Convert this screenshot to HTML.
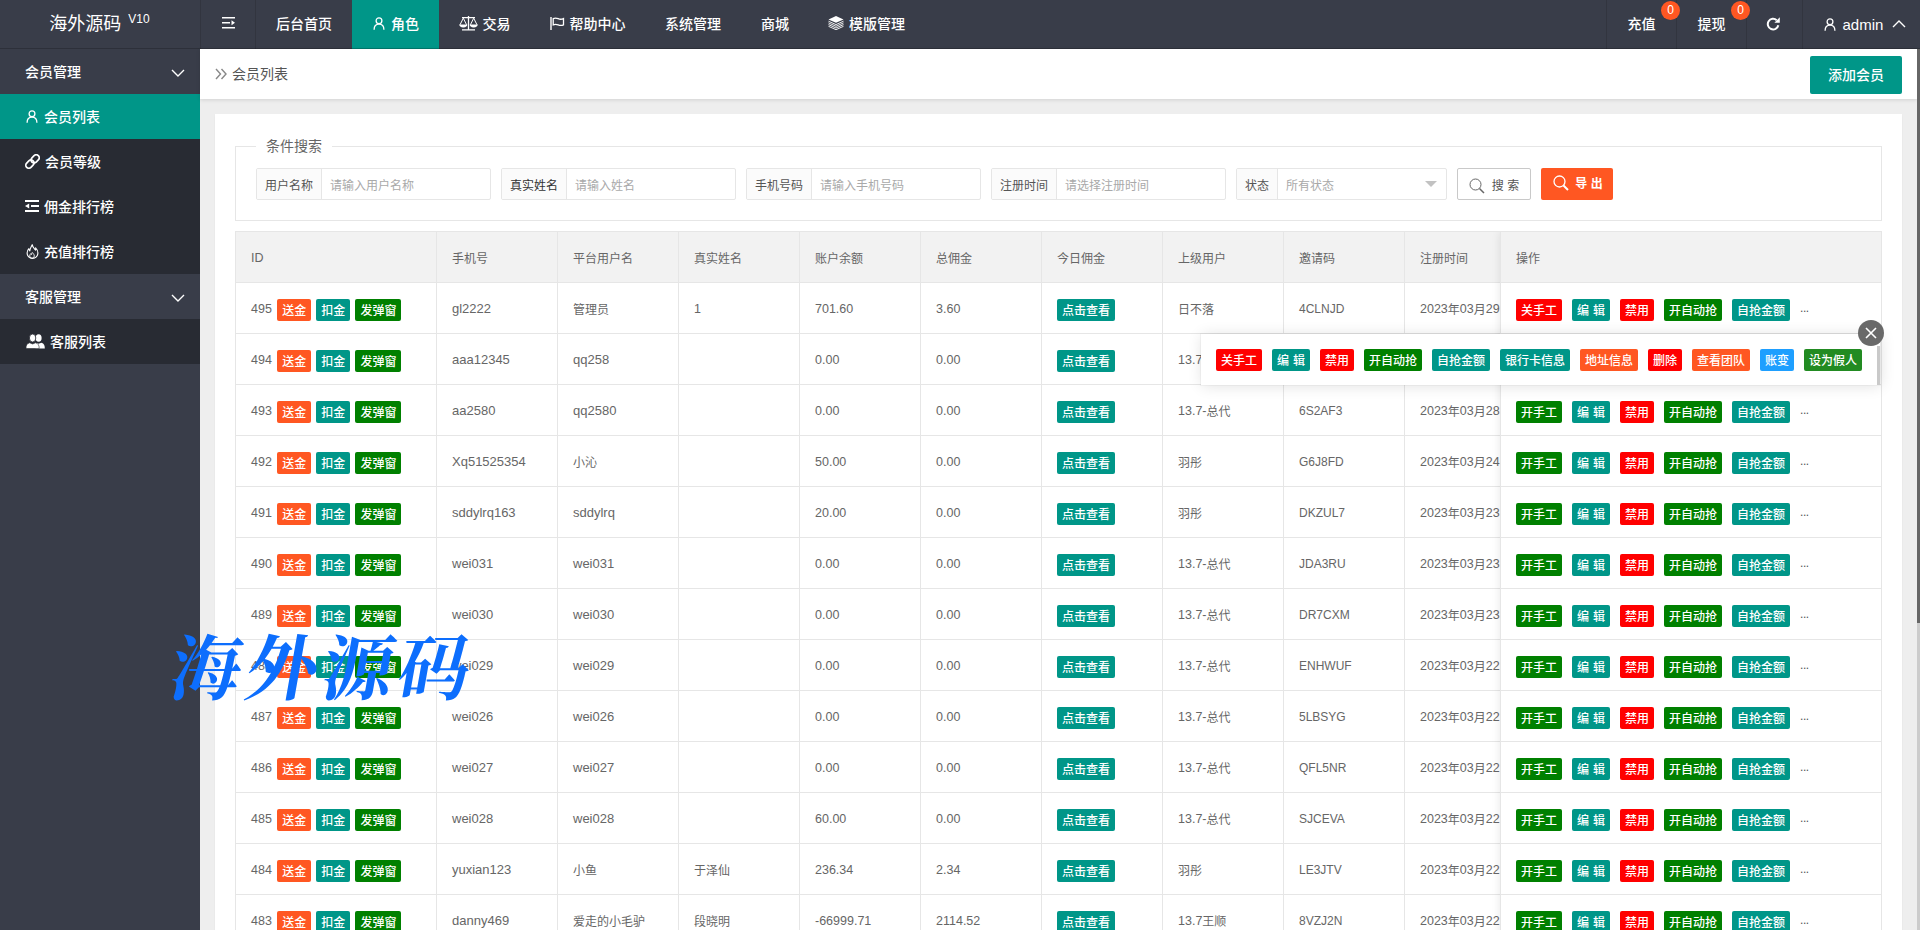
<!DOCTYPE html>
<html lang="zh-CN">
<head>
<meta charset="utf-8">
<title>会员列表</title>
<style>
*{box-sizing:border-box;margin:0;padding:0}
html,body{width:1920px;height:930px;overflow:hidden}
body{font-family:"Liberation Sans","Noto Sans CJK SC",sans-serif;font-size:14px;color:#666;background:#eee;position:relative}
a{text-decoration:none;color:inherit}
ul{list-style:none}
/* header */
#hd{position:absolute;left:0;top:0;width:1920px;height:49px;background:#393D49;color:#fff}
#hd:after{content:"";position:absolute;left:0;top:48px;width:1920px;height:1px;background:rgba(0,0,0,.2);z-index:2}
#logo{position:absolute;left:0;top:0;width:200px;height:49px;line-height:49px;font-weight:400;text-align:center;font-size:18px;color:#fff;padding-right:1px}
#logo sup{font-size:12px;position:relative;top:-7px;vertical-align:baseline;margin-left:2px}
.nav{position:absolute;top:0;height:49px;line-height:49px;font-size:14px;font-weight:500;color:#fff;text-align:center;white-space:nowrap}
.nav svg{vertical-align:middle;margin-right:5px;position:relative;top:-2px}
.vline{position:absolute;top:0;width:1px;height:49px;background:#32353f}
.badge{z-index:3;position:absolute;width:19px;height:19px;border-radius:10px;background:#FF5722;color:#fff;font-size:12px;line-height:19px;text-align:center}
/* side */
#side{position:absolute;left:0;top:49px;width:200px;height:881px;background:#393D49;color:#fff}
#side .grp{height:45px;line-height:46px;padding-left:25px;font-size:14px;font-weight:500;position:relative}
#side .grp svg{position:absolute;right:15px;top:19.500px}
#side .it{height:45px;line-height:46px;padding-left:25px;font-size:14px;font-weight:500;background:#282B33;position:relative;white-space:nowrap}
#side .it.on{background:#009688}
#side .it svg{vertical-align:middle;margin-right:5px;position:relative;top:-2px}
/* crumb */
#crumb{position:absolute;left:200px;top:49px;width:1717px;height:50px;background:#fff;box-shadow:0 1px 4px rgba(0,0,0,.12)}
#crumb .t{position:absolute;left:32px;top:0;line-height:51px;font-size:14px;color:#555}
#crumb svg{position:absolute;left:15px;top:19px}
#addbtn{position:absolute;left:1610px;top:7px;width:92px;height:38px;line-height:38px;background:#009688;color:#fff;border-radius:2px;text-align:center;font-size:14px;font-weight:500}
/* card */
#card{position:absolute;left:215px;top:114px;width:1687px;height:830px;background:#fff;box-shadow:0 1px 2px rgba(0,0,0,.05)}
#fs{position:absolute;left:20px;top:32px;width:1647px;height:75px;border:1px solid #e6e6e6}
#lg{position:absolute;left:20px;top:-11px;padding:0 10px;font-size:14px;color:#666;line-height:20px;background:#fff}
.fi{position:absolute;top:21px;height:32px;border:1px solid #e6e6e6;border-radius:2px;background:#fff;font-size:12px;line-height:34px;white-space:nowrap;overflow:hidden}
.fi .lb{position:absolute;left:0;top:0;height:30px;overflow:hidden;padding:0 8px;background:#FBFBFB;border-right:1px solid #e6e6e6;color:#555}
.fi .ph{position:absolute;top:0;color:#a9a9a9}
.btn-s{position:absolute;top:21px;height:32px;overflow:hidden;line-height:34px;font-size:12px;border-radius:2px;text-align:center;white-space:nowrap}
/* table */
#tb{position:absolute;left:20px;top:117px;width:1647px;height:720px;border:1px solid #e6e6e6;border-bottom:0;overflow:hidden}
table{border-collapse:separate;border-spacing:0;table-layout:fixed}
th,td{height:51px;border-right:1px solid #e6e6e6;border-bottom:1px solid #e6e6e6;padding:0;text-align:left;font-weight:400;font-size:14px;color:#666}
th{background:#f2f2f2}
.cell{padding:0 15px;height:28px;line-height:28px;white-space:nowrap;overflow:hidden;font-size:12.5px}
.cell .z{font-size:12px;position:relative;top:1px}
.cell.z{font-size:12px;line-height:32px}
.cell{line-height:30px}
.cell.f13{font-size:13px}.cell.f12{font-size:12px}
td.c-id .cell{word-spacing:0}
.b{display:inline-block;height:22px;line-height:25px;overflow:hidden;font-weight:500;padding:0 5px;font-size:12px;color:#fff;border-radius:2px;vertical-align:middle;position:relative;top:.3px;word-spacing:.6px}
.b-or{background:#FF5722}.b-tl{background:#009688}.b-gr{background:#008000}.b-rd{background:#FF0000}.b-bl{background:#1E9FFF}.b-g2{background:#228B22}
td.c-id .b{margin-left:5px}
td.c-id .b:first-child{margin-left:2px}
#fix{position:absolute;left:1264px;top:0;width:382px;background:#fff;box-shadow:-1px 0 8px rgba(0,0,0,.08);border-left:1px solid #e6e6e6}
#fix table{width:381px}
#fix .b+.b{margin-left:10px}
#fix .more{margin-left:10px;font-size:12px;letter-spacing:-.4px;color:#555;position:relative;top:-1px}
#fix th,#fix td{border-right:0}
/* tip */
#tip{position:absolute;left:1201px;top:334px;width:679px;height:51px;background:#fff;box-shadow:0 0 0 1px rgba(0,0,0,.03),1px 1px 14px rgba(0,0,0,.12);padding:0 15px;line-height:51px;white-space:nowrap}
#tip .b{top:0;vertical-align:middle;margin-top:-1px}
#tip .b+.b{margin-left:10px}
#tipx{position:absolute;left:1858px;top:320px;width:26px;height:26px;border-radius:13px;background:#696969;}
#wm{position:absolute;left:171px;top:624px;font-family:"Liberation Serif","Noto Serif CJK SC",serif;font-weight:700;font-size:71px;line-height:92px;color:#0d6efd;letter-spacing:5px;transform:skewX(-10deg);transform-origin:0 50%;white-space:nowrap}
#tipsb{position:absolute;left:1877px;top:346px;width:3px;height:39px;background:#c9c9c9}
#sb1{position:absolute;left:1917px;top:49px;width:3px;height:574px;background:#666}
#sb2{position:absolute;left:1917px;top:623px;width:3px;height:307px;background:#ccc}
</style>
</head>
<body>
<div id="hd">
  <div id="logo">海外源码 <sup>V10</sup></div>
  <div class="vline" style="left:200px"></div>
  <div class="nav" style="left:201px;width:54px"><svg width="13" height="12" viewBox="0 0 13 12" style="margin:0"><path d="M0 .75h13M0 5.750h8M0 10.750h13" stroke="#fff" stroke-width="1.500" fill="none"/><path d="M9.500 3.200l3.500 2.550-3.500 2.550z" fill="#fff"/></svg></div>
  <div class="vline" style="left:255px"></div>
  <div class="nav" style="left:256px;width:96px">后台首页</div>
  <div class="nav" style="left:352px;width:87px;background:#009688"><svg width="14" height="14" viewBox="0 0 14 14"><circle cx="7" cy="4.800" r="2.900" stroke="#fff" stroke-width="1.300" fill="none"/><path d="M2.100 13.700c0-3.600 2.200-5.600 4.900-5.600s4.900 2 4.900 5.600" stroke="#fff" stroke-width="1.300" fill="none"/></svg>角色</div>
  <div class="nav" style="left:439px;width:91px"><svg width="19" height="15" viewBox="0 0 19 15"><path d="M3 1.700h13M9.500 0v14M3 13.800h13" stroke="#fff" stroke-width="1.300" fill="none"/><path d="M4.300 2.200L1 8.800M4.300 2.200L7.600 8.800M14.700 2.200L11.400 8.800M14.700 2.200L18 8.800" stroke="#fff" stroke-width="1" fill="none"/><path d="M.3 8.600h8a4 2.800 0 0 1-8 0zM10.700 8.600h8a4 2.800 0 0 1-8 0z" fill="#fff"/></svg>交易</div>
  <div class="nav" style="left:530px;width:115px"><svg width="15" height="13" viewBox="0 0 15 13"><path d="M1 0v13" stroke="#fff" stroke-width="1.400" fill="none"/><path d="M3.200 1.600c2-1 3.500-.6 5 .1s3.200.9 5.300-.1v6.200c-2 1-3.700.8-5.300.1s-3-1-5-.1z" stroke="#fff" stroke-width="1.300" fill="none"/></svg>帮助中心</div>
  <div class="nav" style="left:645px;width:96px">系统管理</div>
  <div class="nav" style="left:741px;width:68px">商城</div>
  <div class="nav" style="left:809px;width:115px"><svg width="16" height="14" viewBox="0 0 16 14"><path d="M8 0l7.500 3.400-7.500 3.400-7.500-3.400z" fill="#fff"/><path d="M.5 5.200l7.500 3.400 7.500-3.400M.5 6.900l7.500 3.400 7.500-3.400M.5 8.600l7.500 3.400 7.500-3.400M.5 10.300l7.500 3.400 7.500-3.400" stroke="#fff" stroke-width=".900" fill="none"/></svg>模版管理</div>
  <div class="vline" style="left:1606px"></div>
  <div class="nav" style="left:1607px;width:69px">充值</div>
  <div class="badge" style="left:1661px;top:1px">0</div>
  <div class="vline" style="left:1676px"></div>
  <div class="nav" style="left:1677px;width:69px">提现</div>
  <div class="badge" style="left:1731px;top:1px">0</div>
  <div class="vline" style="left:1746px"></div>
  <div class="nav" style="left:1747px;width:55px"><svg width="15" height="14" viewBox="0 0 15 14" style="margin:0;left:-1px;top:-1px"><path d="M12.300 8.200a5.300 5.300 0 1 1-1.600-5" stroke="#fff" stroke-width="2" fill="none"/><path d="M13.800 .3v5.400h-5.400z" fill="#fff"/></svg></div>
  <div class="vline" style="left:1802px"></div>
  <div class="nav" style="left:1806px;width:117px;font-size:15px"><svg width="14" height="14" viewBox="0 0 14 14"><circle cx="7" cy="4.800" r="2.900" stroke="#fff" stroke-width="1.300" fill="none"/><path d="M2.100 13.700c0-3.600 2.200-5.600 4.900-5.600s4.900 2 4.900 5.600" stroke="#fff" stroke-width="1.300" fill="none"/></svg>admin <svg width="14" height="8" viewBox="0 0 14 8" style="margin:0 0 0 4px"><path d="M1 7l6-6 6 6" stroke="#fff" stroke-width="1.400" fill="none"/></svg></div>
</div>
<div id="side">
  <div class="grp">会员管理<svg width="14" height="8" viewBox="0 0 14 8"><path d="M1 1l6 6 6-6" stroke="#fff" stroke-width="1.400" fill="none"/></svg></div>
  <div class="it on"><svg width="14" height="14" viewBox="0 0 14 14"><circle cx="7" cy="4.800" r="2.900" stroke="#fff" stroke-width="1.300" fill="none"/><path d="M2.100 13.700c0-3.600 2.200-5.600 4.900-5.600s4.900 2 4.900 5.600" stroke="#fff" stroke-width="1.300" fill="none"/></svg>会员列表</div>
  <div class="it"><svg width="15" height="15" viewBox="0 0 15 15"><g transform="rotate(-45 7.500 7.500)" stroke="#fff" stroke-width="1.700" fill="none"><rect x="-.7" y="4.500" width="9" height="6" rx="3"/><rect x="6.700" y="4.500" width="9" height="6" rx="3"/></g></svg>会员等级</div>
  <div class="it"><svg width="14" height="12" viewBox="0 0 14 12"><path d="M0 1h14M6 6h8M0 11h14" stroke="#fff" stroke-width="1.800" fill="none"/><path d="M4.200 3.400L0 6l4.200 2.600z" fill="#fff"/></svg>佣金排行榜</div>
  <div class="it"><svg width="14" height="15" viewBox="0 0 14 15"><path d="M7.200 .7c.4 2.600 2 3.800 3.300 5.400.3-.8.300-1.500.1-2.300 1.500 1.500 2.300 3.300 2.300 5.200a5.400 5.400 0 0 1-10.800 0c0-1.800.8-3.300 1.800-4.300.1.900.4 1.600.9 2.200.3-2.500 1.500-4.500 2.400-6.200z" stroke="#fff" stroke-width="1.100" fill="none" stroke-linejoin="round"/><path d="M7.300 8.500c1.200 1.200 2 2.300 2 3.500a2.300 2.300 0 0 1-4.600 0c0-1 .5-1.800 1.100-2.400.2.500.4.800.7 1 .1-.8.400-1.500.8-2.100z" stroke="#fff" stroke-width=".900" fill="none"/></svg>充值排行榜</div>
  <div class="grp">客服管理<svg width="14" height="8" viewBox="0 0 14 8"><path d="M1 1l6 6 6-6" stroke="#fff" stroke-width="1.400" fill="none"/></svg></div>
  <div class="it"><svg width="19" height="15" viewBox="0 0 19 15" style="margin-right:6px;left:1px"><ellipse cx="12.600" cy="4" rx="3" ry="3.800" fill="#fff"/><path d="M9.500 8.800l3 1 3-1c2.500.9 3.300 2.300 3.300 5.700h-9.300z" fill="#fff"/><ellipse cx="6.600" cy="4" rx="3.200" ry="4" fill="#fff" stroke="#282B33" stroke-width=".800"/><path d="M0 14.500c0-3.400 1-4.800 3.600-5.700l3 1.200 3-1.200c2.600.9 3.600 2.300 3.600 5.700z" fill="#fff" stroke="#282B33" stroke-width=".600"/></svg>客服列表</div>
</div>
<div id="crumb">
  <svg width="12" height="12" viewBox="0 0 12 12"><path d="M1 1l4.500 5-4.500 5M6.500 1l4.500 5-4.500 5" stroke="#888" stroke-width="1.400" fill="none"/></svg>
  <div class="t">会员列表</div>
  <div id="addbtn">添加会员</div>
</div>
<div id="card">
  <div id="fs"><div id="lg">条件搜索</div>
    <div class="fi" style="left:20px;width:235px"><span class="lb">用户名称</span><span class="ph" style="left:73px">请输入用户名称</span></div>
    <div class="fi" style="left:265px;width:235px"><span class="lb" style="color:#333">真实姓名</span><span class="ph" style="left:73px">请输入姓名</span></div>
    <div class="fi" style="left:510px;width:235px"><span class="lb">手机号码</span><span class="ph" style="left:73px">请输入手机号码</span></div>
    <div class="fi" style="left:755px;width:235px"><span class="lb">注册时间</span><span class="ph" style="left:73px">请选择注册时间</span></div>
    <div class="fi" style="left:1000px;width:211px"><span class="lb">状态</span><span class="ph" style="left:49px">所有状态</span><svg width="12" height="6" viewBox="0 0 12 6" style="position:absolute;right:9px;top:12px"><path d="M0 0h12L6 6z" fill="#c2c2c2"/></svg></div>
    <div class="btn-s" style="left:1221px;width:74px;border:1px solid #c9c9c9;color:#555;background:#fff"><svg width="16" height="16" viewBox="0 0 16 16" style="vertical-align:middle;margin-right:7px;position:relative;top:-1px"><circle cx="6.500" cy="6.500" r="5.500" stroke="#666" stroke-width="1" fill="none"/><path d="M10.500 10.500l4.500 4.500" stroke="#666" stroke-width="1.500"/></svg>搜 索</div>
    <div class="btn-s" style="left:1305px;width:72px;background:#FF5722;color:#fff;line-height:32px;font-size:12px;font-weight:700;padding-left:2px"><svg width="16" height="16" viewBox="0 0 16 16" style="vertical-align:middle;margin-right:6px;position:relative;top:-2px"><circle cx="6.500" cy="6.500" r="5.500" stroke="#fff" stroke-width="1.300" fill="none"/><path d="M10.500 10.500l4.500 4.500" stroke="#fff" stroke-width="2"/></svg>导 出</div>
  </div>
  <div id="tb">
    <table style="width:1360px">
      <colgroup><col style="width:201px"><col style="width:121px"><col style="width:121px"><col style="width:121px"><col style="width:121px"><col style="width:121px"><col style="width:121px"><col style="width:121px"><col style="width:121px"><col style="width:191px"></colgroup>
      <thead><tr><th><div class="cell">ID</div></th><th><div class="cell z">手机号</div></th><th><div class="cell z">平台用户名</div></th><th><div class="cell z">真实姓名</div></th><th><div class="cell z">账户余额</div></th><th><div class="cell z">总佣金</div></th><th><div class="cell z">今日佣金</div></th><th><div class="cell z">上级用户</div></th><th><div class="cell z">邀请码</div></th><th><div class="cell z">注册时间</div></th></tr></thead>
      <tbody>
<tr><td class="c-id"><div class="cell">495 <a class="b b-or">送金</a><a class="b b-tl">扣金</a><a class="b b-gr">发弹窗</a></div></td><td><div class="cell f13">gl2222</div></td><td><div class="cell f13"><span class="z">管理员</span></div></td><td><div class="cell">1</div></td><td><div class="cell">701.60</div></td><td><div class="cell">3.60</div></td><td><div class="cell"><a class="b b-tl">点击查看</a></div></td><td><div class="cell"><span class="z">日不落</span></div></td><td><div class="cell f12">4CLNJD</div></td><td><div class="cell">2023<span class="z">年</span>03<span class="z">月</span>29<span class="z">日</span></div></td></tr>
<tr><td class="c-id"><div class="cell">494 <a class="b b-or">送金</a><a class="b b-tl">扣金</a><a class="b b-gr">发弹窗</a></div></td><td><div class="cell f13">aaa12345</div></td><td><div class="cell f13">qq258</div></td><td><div class="cell"></div></td><td><div class="cell">0.00</div></td><td><div class="cell">0.00</div></td><td><div class="cell"><a class="b b-tl">点击查看</a></div></td><td><div class="cell">13.7-<span class="z">总代</span></div></td><td><div class="cell f12"></div></td><td><div class="cell">2023<span class="z">年</span>03<span class="z">月</span>29<span class="z">日</span></div></td></tr>
<tr><td class="c-id"><div class="cell">493 <a class="b b-or">送金</a><a class="b b-tl">扣金</a><a class="b b-gr">发弹窗</a></div></td><td><div class="cell f13">aa2580</div></td><td><div class="cell f13">qq2580</div></td><td><div class="cell"></div></td><td><div class="cell">0.00</div></td><td><div class="cell">0.00</div></td><td><div class="cell"><a class="b b-tl">点击查看</a></div></td><td><div class="cell">13.7-<span class="z">总代</span></div></td><td><div class="cell f12">6S2AF3</div></td><td><div class="cell">2023<span class="z">年</span>03<span class="z">月</span>28<span class="z">日</span></div></td></tr>
<tr><td class="c-id"><div class="cell">492 <a class="b b-or">送金</a><a class="b b-tl">扣金</a><a class="b b-gr">发弹窗</a></div></td><td><div class="cell f13">Xq51525354</div></td><td><div class="cell f13"><span class="z">小沁</span></div></td><td><div class="cell"></div></td><td><div class="cell">50.00</div></td><td><div class="cell">0.00</div></td><td><div class="cell"><a class="b b-tl">点击查看</a></div></td><td><div class="cell"><span class="z">羽彤</span></div></td><td><div class="cell f12">G6J8FD</div></td><td><div class="cell">2023<span class="z">年</span>03<span class="z">月</span>24<span class="z">日</span></div></td></tr>
<tr><td class="c-id"><div class="cell">491 <a class="b b-or">送金</a><a class="b b-tl">扣金</a><a class="b b-gr">发弹窗</a></div></td><td><div class="cell f13">sddylrq163</div></td><td><div class="cell f13">sddylrq</div></td><td><div class="cell"></div></td><td><div class="cell">20.00</div></td><td><div class="cell">0.00</div></td><td><div class="cell"><a class="b b-tl">点击查看</a></div></td><td><div class="cell"><span class="z">羽彤</span></div></td><td><div class="cell f12">DKZUL7</div></td><td><div class="cell">2023<span class="z">年</span>03<span class="z">月</span>23<span class="z">日</span></div></td></tr>
<tr><td class="c-id"><div class="cell">490 <a class="b b-or">送金</a><a class="b b-tl">扣金</a><a class="b b-gr">发弹窗</a></div></td><td><div class="cell f13">wei031</div></td><td><div class="cell f13">wei031</div></td><td><div class="cell"></div></td><td><div class="cell">0.00</div></td><td><div class="cell">0.00</div></td><td><div class="cell"><a class="b b-tl">点击查看</a></div></td><td><div class="cell">13.7-<span class="z">总代</span></div></td><td><div class="cell f12">JDA3RU</div></td><td><div class="cell">2023<span class="z">年</span>03<span class="z">月</span>23<span class="z">日</span></div></td></tr>
<tr><td class="c-id"><div class="cell">489 <a class="b b-or">送金</a><a class="b b-tl">扣金</a><a class="b b-gr">发弹窗</a></div></td><td><div class="cell f13">wei030</div></td><td><div class="cell f13">wei030</div></td><td><div class="cell"></div></td><td><div class="cell">0.00</div></td><td><div class="cell">0.00</div></td><td><div class="cell"><a class="b b-tl">点击查看</a></div></td><td><div class="cell">13.7-<span class="z">总代</span></div></td><td><div class="cell f12">DR7CXM</div></td><td><div class="cell">2023<span class="z">年</span>03<span class="z">月</span>23<span class="z">日</span></div></td></tr>
<tr><td class="c-id"><div class="cell">488 <a class="b b-or">送金</a><a class="b b-tl">扣金</a><a class="b b-gr">发弹窗</a></div></td><td><div class="cell f13">wei029</div></td><td><div class="cell f13">wei029</div></td><td><div class="cell"></div></td><td><div class="cell">0.00</div></td><td><div class="cell">0.00</div></td><td><div class="cell"><a class="b b-tl">点击查看</a></div></td><td><div class="cell">13.7-<span class="z">总代</span></div></td><td><div class="cell f12">ENHWUF</div></td><td><div class="cell">2023<span class="z">年</span>03<span class="z">月</span>22<span class="z">日</span></div></td></tr>
<tr><td class="c-id"><div class="cell">487 <a class="b b-or">送金</a><a class="b b-tl">扣金</a><a class="b b-gr">发弹窗</a></div></td><td><div class="cell f13">wei026</div></td><td><div class="cell f13">wei026</div></td><td><div class="cell"></div></td><td><div class="cell">0.00</div></td><td><div class="cell">0.00</div></td><td><div class="cell"><a class="b b-tl">点击查看</a></div></td><td><div class="cell">13.7-<span class="z">总代</span></div></td><td><div class="cell f12">5LBSYG</div></td><td><div class="cell">2023<span class="z">年</span>03<span class="z">月</span>22<span class="z">日</span></div></td></tr>
<tr><td class="c-id"><div class="cell">486 <a class="b b-or">送金</a><a class="b b-tl">扣金</a><a class="b b-gr">发弹窗</a></div></td><td><div class="cell f13">wei027</div></td><td><div class="cell f13">wei027</div></td><td><div class="cell"></div></td><td><div class="cell">0.00</div></td><td><div class="cell">0.00</div></td><td><div class="cell"><a class="b b-tl">点击查看</a></div></td><td><div class="cell">13.7-<span class="z">总代</span></div></td><td><div class="cell f12">QFL5NR</div></td><td><div class="cell">2023<span class="z">年</span>03<span class="z">月</span>22<span class="z">日</span></div></td></tr>
<tr><td class="c-id"><div class="cell">485 <a class="b b-or">送金</a><a class="b b-tl">扣金</a><a class="b b-gr">发弹窗</a></div></td><td><div class="cell f13">wei028</div></td><td><div class="cell f13">wei028</div></td><td><div class="cell"></div></td><td><div class="cell">60.00</div></td><td><div class="cell">0.00</div></td><td><div class="cell"><a class="b b-tl">点击查看</a></div></td><td><div class="cell">13.7-<span class="z">总代</span></div></td><td><div class="cell f12">SJCEVA</div></td><td><div class="cell">2023<span class="z">年</span>03<span class="z">月</span>22<span class="z">日</span></div></td></tr>
<tr><td class="c-id"><div class="cell">484 <a class="b b-or">送金</a><a class="b b-tl">扣金</a><a class="b b-gr">发弹窗</a></div></td><td><div class="cell f13">yuxian123</div></td><td><div class="cell f13"><span class="z">小鱼</span></div></td><td><div class="cell"><span class="z">于泽仙</span></div></td><td><div class="cell">236.34</div></td><td><div class="cell">2.34</div></td><td><div class="cell"><a class="b b-tl">点击查看</a></div></td><td><div class="cell"><span class="z">羽彤</span></div></td><td><div class="cell f12">LE3JTV</div></td><td><div class="cell">2023<span class="z">年</span>03<span class="z">月</span>22<span class="z">日</span></div></td></tr>
<tr><td class="c-id"><div class="cell">483 <a class="b b-or">送金</a><a class="b b-tl">扣金</a><a class="b b-gr">发弹窗</a></div></td><td><div class="cell f13">danny469</div></td><td><div class="cell f13"><span class="z">爱走的小毛驴</span></div></td><td><div class="cell"><span class="z">段晓明</span></div></td><td><div class="cell">-66999.71</div></td><td><div class="cell">2114.52</div></td><td><div class="cell"><a class="b b-tl">点击查看</a></div></td><td><div class="cell">13.7<span class="z">王顺</span></div></td><td><div class="cell f12">8VZJ2N</div></td><td><div class="cell">2023<span class="z">年</span>03<span class="z">月</span>22<span class="z">日</span></div></td></tr>
      </tbody>
    </table>
    <div id="fix">
      <table>
        <thead><tr><th><div class="cell z">操作</div></th></tr></thead>
        <tbody>
<tr><td><div class="cell"><a class="b b-rd">关手工</a><a class="b b-tl">编 辑</a><a class="b b-rd">禁用</a><a class="b b-gr">开自动抢</a><a class="b b-tl">自抢金额</a><span class="more">...</span></div></td></tr>
<tr><td><div class="cell"><a class="b b-rd">关手工</a><a class="b b-tl">编 辑</a><a class="b b-rd">禁用</a><a class="b b-gr">开自动抢</a><a class="b b-tl">自抢金额</a><span class="more">...</span></div></td></tr>
<tr><td><div class="cell"><a class="b b-gr">开手工</a><a class="b b-tl">编 辑</a><a class="b b-rd">禁用</a><a class="b b-gr">开自动抢</a><a class="b b-tl">自抢金额</a><span class="more">...</span></div></td></tr>
<tr><td><div class="cell"><a class="b b-gr">开手工</a><a class="b b-tl">编 辑</a><a class="b b-rd">禁用</a><a class="b b-gr">开自动抢</a><a class="b b-tl">自抢金额</a><span class="more">...</span></div></td></tr>
<tr><td><div class="cell"><a class="b b-gr">开手工</a><a class="b b-tl">编 辑</a><a class="b b-rd">禁用</a><a class="b b-gr">开自动抢</a><a class="b b-tl">自抢金额</a><span class="more">...</span></div></td></tr>
<tr><td><div class="cell"><a class="b b-gr">开手工</a><a class="b b-tl">编 辑</a><a class="b b-rd">禁用</a><a class="b b-gr">开自动抢</a><a class="b b-tl">自抢金额</a><span class="more">...</span></div></td></tr>
<tr><td><div class="cell"><a class="b b-gr">开手工</a><a class="b b-tl">编 辑</a><a class="b b-rd">禁用</a><a class="b b-gr">开自动抢</a><a class="b b-tl">自抢金额</a><span class="more">...</span></div></td></tr>
<tr><td><div class="cell"><a class="b b-gr">开手工</a><a class="b b-tl">编 辑</a><a class="b b-rd">禁用</a><a class="b b-gr">开自动抢</a><a class="b b-tl">自抢金额</a><span class="more">...</span></div></td></tr>
<tr><td><div class="cell"><a class="b b-gr">开手工</a><a class="b b-tl">编 辑</a><a class="b b-rd">禁用</a><a class="b b-gr">开自动抢</a><a class="b b-tl">自抢金额</a><span class="more">...</span></div></td></tr>
<tr><td><div class="cell"><a class="b b-gr">开手工</a><a class="b b-tl">编 辑</a><a class="b b-rd">禁用</a><a class="b b-gr">开自动抢</a><a class="b b-tl">自抢金额</a><span class="more">...</span></div></td></tr>
<tr><td><div class="cell"><a class="b b-gr">开手工</a><a class="b b-tl">编 辑</a><a class="b b-rd">禁用</a><a class="b b-gr">开自动抢</a><a class="b b-tl">自抢金额</a><span class="more">...</span></div></td></tr>
<tr><td><div class="cell"><a class="b b-gr">开手工</a><a class="b b-tl">编 辑</a><a class="b b-rd">禁用</a><a class="b b-gr">开自动抢</a><a class="b b-tl">自抢金额</a><span class="more">...</span></div></td></tr>
<tr><td><div class="cell"><a class="b b-gr">开手工</a><a class="b b-tl">编 辑</a><a class="b b-rd">禁用</a><a class="b b-gr">开自动抢</a><a class="b b-tl">自抢金额</a><span class="more">...</span></div></td></tr>
        </tbody>
      </table>
    </div>
  </div>
</div>
<div id="tip"><a class="b b-rd">关手工</a><a class="b b-tl">编 辑</a><a class="b b-rd">禁用</a><a class="b b-gr">开自动抢</a><a class="b b-tl">自抢金额</a><a class="b b-tl">银行卡信息</a><a class="b b-or">地址信息</a><a class="b b-rd">删除</a><a class="b b-or">查看团队</a><a class="b b-bl">账变</a><a class="b b-g2">设为假人</a></div>
<div id="tipx"><svg width="26" height="26" viewBox="0 0 26 26"><path d="M8 8l10 10M18 8L8 18" stroke="#fff" stroke-width="1.600"/></svg></div>
<div id="wm">海外源码</div>
<div id="tipsb"></div><div id="sb1"></div><div id="sb2"></div>
</body>
</html>
